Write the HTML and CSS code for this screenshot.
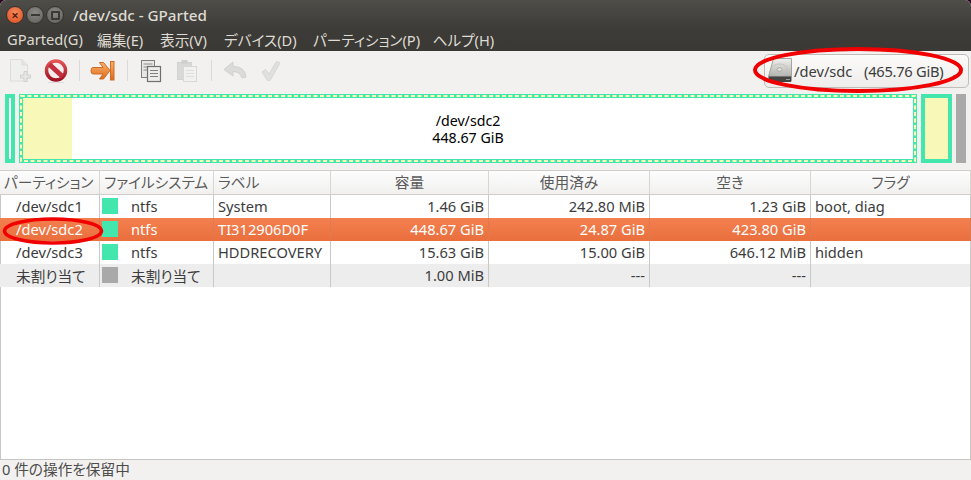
FILE: index.html
```html
<!DOCTYPE html>
<html lang="ja">
<head>
<meta charset="utf-8">
<title>/dev/sdc - GParted</title>
<link rel="stylesheet" href="styles.css">
</head>
<body>
<div class="window">
  <header class="chrome">
    <div class="titlebar">
      <div class="wm-buttons">
        <span class="wm wm-close">×</span>
        <span class="wm wm-min"><i class="glyph-min"></i></span>
        <span class="wm wm-max"><i class="glyph-max"></i></span>
      </div>
      <div class="title">/dev/sdc - GParted</div>
    </div>
    <nav class="menubar">
      <span>GParted(G)</span>
      <span>編集(E)</span>
      <span>表示(V)</span>
      <span>デバイス(D)</span>
      <span>パーティション(P)</span>
      <span>ヘルプ(H)</span>
    </nav>
  </header>

  <div class="toolbar">
    <span class="tool">
      <svg width="24" height="26" viewBox="0 0 24 26"><path d="M2.500 1.500H14L19.500 7V23H2.500Z" fill="#efefed" stroke="#dcdcda"/><path d="M14 1.500V7H19.500" fill="#e4e4e2" stroke="#dcdcda"/><path d="M16 13.500h3v3.500h3.500v3h-3.500v3.500h-3v-3.500h-3.500v-3h3.500z" fill="#e6e6e4" stroke="#cfcfcc"/></svg>
    </span>
    <span class="tool">
      <svg width="26" height="26" viewBox="0 0 26 26"><defs><linearGradient id="rd" x1="0" y1="0" x2="0" y2="1"><stop offset="0" stop-color="#e25656"/><stop offset="1" stop-color="#9e1325"/></linearGradient></defs><circle cx="13" cy="12.500" r="9.500" fill="#f6eeee" stroke="url(#rd)" stroke-width="3.500"/><path d="M6.500 6.500L19.500 18.500" stroke="#c32f3c" stroke-width="5" fill="none"/><path d="M5 24.500h16" stroke="#dedcda" stroke-width="1"/></svg>
    </span>
    <span class="sep sep-a"></span>
    <span class="tool">
      <svg width="26" height="24" viewBox="0 0 26 24"><defs><linearGradient id="or" x1="0" y1="0" x2="0" y2="1"><stop offset="0" stop-color="#f6b36c"/><stop offset="1" stop-color="#e06a1c"/></linearGradient></defs><path d="M3 8.500H13L9.500 3.500H13.500L20 11.500L13.500 20H9.500L13 15H3Q1 15 1 11.700Q1 8.500 3 8.500Z" fill="url(#or)" stroke="#cf6a24"/><rect x="20.500" y="2.500" width="3.500" height="18.500" fill="url(#or)" stroke="#cf6a24"/></svg>
    </span>
    <span class="sep sep-b"></span>
    <span class="tool">
      <svg width="22" height="24" viewBox="0 0 22 24"><rect x="1.500" y="1.500" width="13" height="17" fill="#e7e7e5" stroke="#7f7f7c"/><path d="M3.500 5h9M3.500 8h9M3.500 11h9" stroke="#8e8e8b"/><rect x="7.500" y="7.500" width="13" height="15" fill="#ececea" stroke="#6f6f6c" stroke-width="1.200"/><path d="M10 11.500h8M10 14.500h8M10 17.500h8" stroke="#808080"/></svg>
    </span>
    <span class="tool">
      <svg width="22" height="24" viewBox="0 0 22 24"><rect x="1.500" y="3.500" width="14" height="17" fill="#d9d9d7" stroke="#d2d2d0"/><rect x="5.500" y="1" width="6" height="4" fill="#d0d0ce"/><rect x="7.500" y="7.500" width="13" height="15" fill="#f1f1ef" stroke="#d8d8d6"/><path d="M10 11.500h8M10 14.500h8M10 17.500h8" stroke="#dededc"/></svg>
    </span>
    <span class="sep sep-b"></span>
    <span class="tool">
      <svg width="24" height="20" viewBox="0 0 24 20"><path d="M10 1L1 8.500L10 15V10.500Q17 10.500 19 17L23 16Q22 5.500 10 5.500Z" fill="#dbdbd9" stroke="#d0d0ce"/></svg>
    </span>
    <span class="tool">
      <svg width="20" height="22" viewBox="0 0 20 22"><path d="M1 12L4.500 9.500L8 14L15.500 1.500L19 3L9 20.500H6.500Z" fill="#e0e0de" stroke="#d6d6d4"/></svg>
    </span>
    <div class="device-combo">
      <svg class="disk" width="25" height="25" viewBox="0 0 25 25"><defs><linearGradient id="dk" x1="0" y1="0" x2="0" y2="1"><stop offset="0" stop-color="#f0f0ee"/><stop offset="1" stop-color="#b0b0ad"/></linearGradient></defs><path d="M5.500 0.500H23.500V18.500H0.500Z" fill="url(#dk)" stroke="#a3a3a0"/><ellipse cx="11.500" cy="11.500" rx="8" ry="5.500" fill="none" stroke="#c2c2bf"/><ellipse cx="11.500" cy="11.500" rx="2.500" ry="1.800" fill="#e2e2e0" stroke="#aaaaa7"/><path d="M0.500 18.500H23.500V22.500Q23.500 24 22 24H2Q0.500 24 0.500 22.500Z" fill="#444442"/><path d="M18 21.500h4" stroke="#9a9a98"/></svg>
      <span class="device-name">/dev/sdc</span>
      <span class="device-size">(465.76 GiB)</span>
      <i class="combo-arrow"></i>
    </div>
  </div>

  <section class="graph">
    <div class="part part-small"></div>
    <div class="part part-main">
      <div class="used"></div>
      <div class="part-label"><div class="label-line">/dev/sdc2</div><div class="label-line">448.67 GiB</div></div>
      <svg class="dashes" width="898" height="69" viewBox="0 0 898 69"><rect x="2" y="2" width="894" height="65" fill="none" stroke="#f8f8b8" stroke-width="2" stroke-dasharray="4 2.500"/></svg>
    </div>
    <div class="part part-tail"></div>
    <div class="unalloc-bar"></div>
  </section>

  <main class="list">
    <table class="parts">
      <colgroup>
        <col class="c1"><col class="c2"><col class="c3"><col class="c4"><col class="c5"><col class="c6"><col class="c7">
      </colgroup>
      <thead>
        <tr>
          <th class="left">パーティション</th>
          <th class="left">ファイルシステム</th>
          <th class="left">ラベル</th>
          <th>容量</th>
          <th>使用済み</th>
          <th>空き</th>
          <th>フラグ</th>
        </tr>
      </thead>
      <tbody>
        <tr>
          <td class="name">/dev/sdc1</td>
          <td><div class="fs"><i class="swatch"></i>ntfs</div></td>
          <td class="label">System</td>
          <td class="num">1.46 GiB</td>
          <td class="num">242.80 MiB</td>
          <td class="num">1.23 GiB</td>
          <td class="flag">boot, diag</td>
        </tr>
        <tr class="selected">
          <td class="name">/dev/sdc2</td>
          <td><div class="fs"><i class="swatch"></i>ntfs</div></td>
          <td class="label">TI312906D0F</td>
          <td class="num">448.67 GiB</td>
          <td class="num">24.87 GiB</td>
          <td class="num">423.80 GiB</td>
          <td class="flag"></td>
        </tr>
        <tr>
          <td class="name">/dev/sdc3</td>
          <td><div class="fs"><i class="swatch"></i>ntfs</div></td>
          <td class="label">HDDRECOVERY</td>
          <td class="num">15.63 GiB</td>
          <td class="num">15.00 GiB</td>
          <td class="num">646.12 MiB</td>
          <td class="flag">hidden</td>
        </tr>
        <tr class="alt">
          <td class="name">未割り当て</td>
          <td><div class="fs"><i class="swatch swatch-grey"></i>未割り当て</div></td>
          <td class="label"></td>
          <td class="num">1.00 MiB</td>
          <td class="num">---</td>
          <td class="num">---</td>
          <td class="flag"></td>
        </tr>
      </tbody>
    </table>
  </main>

  <footer class="status">0 件の操作を保留中</footer>

  <svg class="ring ring-device" width="216" height="50" viewBox="0 0 216 50"><ellipse cx="108" cy="25" rx="103" ry="21" fill="none" stroke="#f00000" stroke-width="4"/></svg>
  <svg class="ring ring-row" width="104" height="30" viewBox="0 0 104 30"><ellipse cx="52" cy="15" rx="48.500" ry="12" fill="none" stroke="#f00000" stroke-width="3.500"/></svg>
</div>
</body>
</html>
```
FILE: styles.css
```css
* { box-sizing: border-box; }
html, body { margin: 0; padding: 0; }
body {
  width: 971px;
  height: 480px;
  overflow: hidden;
  font-family: "Noto Sans", "Noto Sans CJK JP", sans-serif;
  font-size: 14.67px;
  font-feature-settings: "palt";
  color: #3c3c3c;
  background: #2c001e;
}
.window {
  position: relative;
  width: 971px;
  height: 480px;
  display: flex;
  flex-direction: column;
  background: #f2f1f0;
  border-radius: 6px 6px 0 0;
  overflow: hidden;
}

/* title + menu */
.chrome { background: linear-gradient(#4e4d48, #3c3b37 30px, #3a3935); }
.titlebar { height: 27px; display: flex; align-items: center; padding-left: 6px; }
.wm-buttons { display: flex; gap: 2px; width: 67px; padding-top: 3px; }
.wm {
  width: 18px; height: 18px; border-radius: 50%;
  display: flex; align-items: center; justify-content: center;
  background: radial-gradient(circle at 50% 35%, #8a8983, #5f5e59);
  border: 1px solid #34332f;
}
.wm-close {
  background: radial-gradient(circle at 50% 35%, #f58a5c, #dd4a1e);
  color: #5a2110; font-size: 13px; line-height: 1; font-weight: 700;
}
.glyph-min { width: 9px; height: 2px; background: #3a3935; }
.glyph-max { width: 9px; height: 9px; border: 2px solid #3a3935; border-radius: 1px; }
.title { color: #dfdbd2; font-weight: 500; font-size: 15.2px; padding-top: 3px; }
.menubar {
  height: 24px;
  display: grid;
  grid-template-columns: 90px 63px 64px 89px 119.500px auto;
  align-items: center;
  padding-left: 7px;
  color: #dfdbd2;
  white-space: nowrap;
}

/* toolbar */
.toolbar {
  height: 39px;
  display: flex;
  align-items: center;
  padding-left: 2px;
}
.tool { width: 36px; display: flex; justify-content: center; align-items: center; }
.sep { height: 21px; width: 1px; background: #dcdad7; }
.sep-a { margin: 0 5px 0 5px; }
.sep-b { margin: 0 5px 0 6px; }
.device-combo {
  margin-left: auto;
  margin-right: 2px;
  width: 205px;
  height: 34px;
  position: relative;
  display: flex;
  align-items: center;
  padding-left: 3px;
  border: 1px solid #c0bdb9;
  border-radius: 5px;
  background: linear-gradient(#fbfbfa, #efedeb);
  color: #3c3c3c;
  white-space: nowrap;
}
.disk { flex: none; }
.device-name { margin-left: 1px; width: 70px; }
.device-size { letter-spacing: -0.25px; }
.combo-arrow {
  position: absolute; right: 9px; top: 20px;
  width: 0; height: 0;
  border-left: 3px solid transparent; border-right: 3px solid transparent;
  border-top: 3px solid #555;
}

/* graph */
.graph {
  height: 80px;
  display: flex;
  align-items: flex-start;
  padding: 4px 0 0 5px;
  gap: 4px;
  color: #000;
}
.part { height: 69px; border: 4px solid #43e6ac; background: #fff; flex: none; }
.part-small { width: 10px; }
.part-main {
  width: 898px;
  position: relative;
  display: flex;
  justify-content: center;
  align-items: center;
}
.used {
  position: absolute; left: 0; top: 0; bottom: 0;
  width: 49px; background: #f8f8b8;
}
.part-label { position: relative; text-align: center; padding-top: 1px; font-size: 14.2px; }
.label-line { height: 17px; line-height: 17px; overflow: hidden; }
.dashes { position: absolute; left: -4px; top: -4px; }
.part-tail { width: 31px; background: #f8f8b8; }
.unalloc-bar { width: 10px; height: 69px; background: #a9a9a9; flex: none; }

/* table */
.list {
  flex: 1;
  min-height: 0;
  background: #fff;
  border-bottom: 1px solid #c6c4c0;
  box-shadow: inset 1px 0 #c9c7c3, inset -1px 0 #c9c7c3;
}
.parts {
  width: 971px;
  table-layout: fixed;
  border-collapse: separate;
  border-spacing: 0;
}
.c1 { width: 100px; } .c2 { width: 114px; } .c3 { width: 117px; }
.c4 { width: 158px; } .c5 { width: 161px; } .c6 { width: 161px; } .c7 { width: 160px; }
th {
  height: 25px;
  padding: 0 0 2px;
  font-weight: 400;
  color: #5a5a5a;
  text-align: center;
  white-space: nowrap;
  overflow: hidden;
  background: linear-gradient(#fdfdfd, #f1f0ef);
  border-top: 1px solid #cfcdc9;
  border-bottom: 1px solid #cfcdc9;
  border-right: 1px solid #d8d6d3;
}
th.left { text-align: left; padding-left: 4px; }
td {
  height: 23px;
  padding: 0 0 1px;
  white-space: nowrap;
  border-right: 1px solid #c9c9c7;
  color: #3c3c3c;
}
td.name { padding-left: 16px; }
td.label { padding-left: 4px; }
td.num { text-align: right; padding-right: 4px; }
td.flag { padding-left: 4px; }
.fs { display: flex; align-items: center; gap: 13px; padding-left: 2px; }
.swatch { width: 16px; height: 16px; background: #43e6ac; flex: none; }
.swatch-grey { background: #a9a9a9; }
.selected td {
  background: linear-gradient(#f4804f, #e96f3d);
  color: #fff;
  border-right-color: #dc7b52;
}
.alt td { background: #ededed; }

/* status */
.status {
  height: 20px;
  line-height: 18px;
  padding-left: 2px;
  color: #4c4c4c;
  flex: none;
}

/* annotations drawn over the screenshot */
.ring { position: absolute; }
.ring-device { left: 750px; top: 45px; }
.ring-row { left: 1px; top: 216px; }
```
